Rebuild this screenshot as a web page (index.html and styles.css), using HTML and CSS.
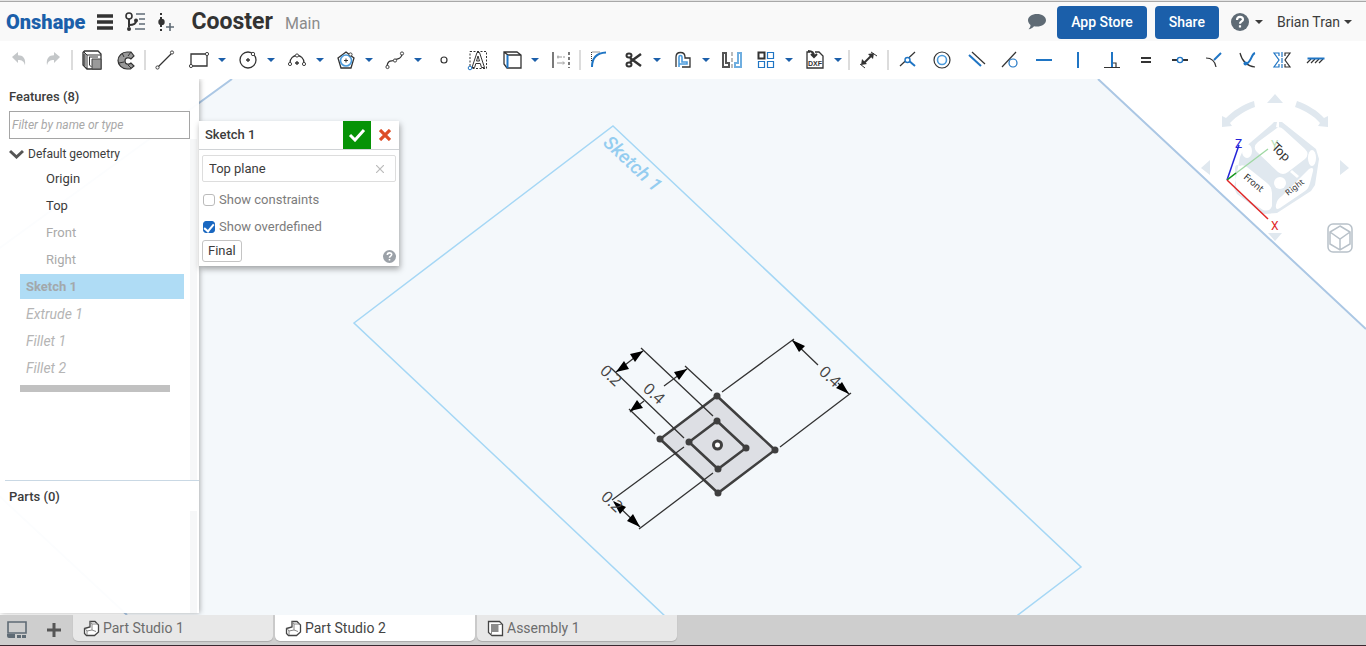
FILE: index.html
```html
<!DOCTYPE html>
<html lang="en">
<head>
<meta charset="utf-8">
<title>Cooster - Onshape</title>
<link rel="stylesheet" href="styles.css">
</head>
<body>
<header class="topbar">
  <a class="brand" href="#">Onshape</a>
  <button class="hbtn" aria-label="Menu"><svg width="16" height="18" viewBox="0 0 16 18"><path d="M0 3h16M0 9h16M0 15h16" stroke="#333" stroke-width="3.4"/></svg></button>
  <button class="hbtn" aria-label="Versions"><svg width="21" height="20" viewBox="0 0 21 20" fill="none"><path d="M4 7v8M4 13c5 0 7-1 7-4" stroke="#333" stroke-width="2"/><circle cx="4" cy="4" r="3" stroke="#333" stroke-width="1.600"/><circle cx="4" cy="17" r="2" fill="#333"/><circle cx="11" cy="8.500" r="2" fill="#333"/><path d="M11 2h9M14 7h6M14 12h6M10 17h10" stroke="#5f6b75" stroke-width="1.600"/></svg></button>
  <button class="hbtn" aria-label="Create version"><svg width="17" height="20" viewBox="0 0 17 20" fill="none"><path d="M3 1v18" stroke="#333" stroke-width="2" stroke-dasharray="2 2"/><circle cx="3.500" cy="10" r="3.200" fill="#333"/><path d="M8 15h8M12 11v8" stroke="#5f6b75" stroke-width="1.600"/></svg></button>
  <h1 class="doc">Cooster</h1>
  <span class="branch">Main</span>
  <div class="account">
    <button class="hbtn" aria-label="Comments"><svg width="20" height="18" viewBox="0 0 20 18"><path d="M10 1c5 0 9 2.700 9 6.300s-4 6.300-9 6.300c-1 0-2-.1-3-.3-1.500 1.700-3.300 2.700-5.500 3C3 15 3.500 13.700 3.500 12 2 10.800 1 9.200 1 7.300 1 3.700 5 1 10 1z" fill="#5f6b75"/></svg></button>
    <button class="primary">App Store</button>
    <button class="primary">Share</button>
    <button class="menu" aria-label="Help"><svg width="18" height="18" viewBox="0 0 18 18"><circle cx="9" cy="9" r="9" fill="#5f6b75"/><path d="M6 7c0-4 6-4 6-.6C12 8.500 9 8.500 9 10.800M9 12.300v2.200" stroke="#fff" stroke-width="2.200" fill="none"/></svg><i class="caret"></i></button>
    <button class="menu user">Brian Tran<i class="caret"></i></button>
  </div>
</header>

<nav class="tools" aria-label="Sketch tools">
  <button class="tool" aria-label="Undo"><svg viewBox="0 0 24 24"><path d="M5 9l6-5v3.300c5 0 8 3 7 10-1-4-3-5.300-7-5.300V15z" fill="#c4c7c9"/></svg></button>
  <button class="tool" aria-label="Redo"><svg viewBox="0 0 24 24"><path d="M19 9l-6-5v3.300c-5 0-8 3-7 10 1-4 3-5.300 7-5.300V15z" fill="#c4c7c9"/></svg></button>
  <i class="sep"></i>
  <button class="tool" aria-label="Extrude"><svg viewBox="0 0 24 24"><path d="M3 4.500L4.500 3H18l3 3v15H7l-4-4z" fill="#fff" class="k"/><path d="M3.500 3.500L7 7h14M7 7v14M5 5v13M9 9h9M9.500 9v8l2 2M4 6v11" class="t"/><path d="M12 11h9v10h-9z" fill="#9a9a9a" stroke="#444"/></svg></button>
  <button class="tool" aria-label="Revolve"><svg viewBox="0 0 24 24"><path d="M17 4h-4c-5 0-9 4-9 8.500S8 21 13 21h3.500l3.500-3-3-3c-2 2-6 1.500-6-2s4-4 6-2l3-3z" fill="#999" class="b"/><path d="M17 4l-3 4M17 20l-3-3M8 5l2 4M5 15l5-1" class="t"/></svg></button>
  <i class="sep"></i>
  <button class="tool" aria-label="Line"><svg viewBox="0 0 24 24"><path d="M5 19L18 6" class="b"/><circle cx="4.500" cy="19.500" r="1.600" class="n"/><circle cx="19" cy="4.500" r="1.600" class="n"/></svg></button>
  <button class="tool drop" aria-label="Rectangle"><svg viewBox="0 0 24 24"><path d="M4 6h16v12H4z" class="k"/><circle cx="4" cy="18" r="1.600" class="n"/><circle cx="20" cy="6" r="1.600" class="n"/></svg><i class="caret"></i></button>
  <button class="tool drop" aria-label="Circle"><svg viewBox="0 0 24 24"><circle cx="12" cy="12" r="8" class="k"/><path d="M10 12h4M12 10v4" class="k"/><circle cx="17" cy="6" r="1.700" class="n"/></svg><i class="caret"></i></button>
  <button class="tool drop" aria-label="Arc"><svg viewBox="0 0 24 24"><path d="M5 15C5 5 19 5 19 15" class="k"/><path d="M10 15h4M12 13v4" class="k"/><circle cx="5" cy="16" r="1.600" class="n"/><circle cx="19" cy="16" r="1.600" class="n"/><circle cx="12" cy="7.500" r="1.600" class="n"/></svg><i class="caret"></i></button>
  <button class="tool drop" aria-label="Polygon"><svg viewBox="0 0 24 24"><path d="M12 4l8 6-3 10H7L4 10z" class="k"/><circle cx="12" cy="12.500" r="5.500" class="l"/><path d="M10 12.500h4M12 10.500v4" class="t"/><circle cx="16.500" cy="6.500" r="1.600" class="n"/></svg><i class="caret"></i></button>
  <button class="tool drop" aria-label="Spline"><svg viewBox="0 0 24 24"><path d="M4 18c1-7 5-4 8-6s6 0 7-6" class="k"/><circle cx="4.500" cy="19" r="1.600" class="n"/><circle cx="12" cy="12.500" r="1.600" class="n"/><circle cx="19" cy="5.500" r="1.600" class="n"/></svg><i class="caret"></i></button>
  <button class="tool" aria-label="Point"><svg viewBox="0 0 24 24"><circle cx="12" cy="12" r="3" class="b"/></svg></button>
  <button class="tool" aria-label="Text"><svg viewBox="0 0 24 24"><path d="M4 3.500h16.500v17H4z" class="t" stroke-dasharray="2 1.500"/><path d="M6 19.500l5-15h2.500l5 15h-3l-1.200-4h-4.500l-1.200 4zM10.500 13h3L12 8z" class="t"/><circle cx="4" cy="20" r="1.800" fill="#fff" stroke="#1f75c4"/></svg></button>
  <button class="tool drop" aria-label="Use"><svg viewBox="0 0 24 24"><path d="M4 4h13l4 3v13H7l-3-4zM4 4l4 3h13" class="k"/><path d="M7.500 7v13" class="bl"/></svg><i class="caret"></i></button>
  <button class="tool" aria-label="Construction"><svg viewBox="0 0 24 24"><path d="M4 4v16" class="k"/><path d="M20 4v16" class="k" stroke-dasharray="3 2"/><path d="M8 9h8M8 15h8" stroke="#999" fill="none" stroke-dasharray="5 1"/><path d="M9 7.500v3M14 13.500v3" stroke="#999"/></svg></button>
  <i class="sep"></i>
  <button class="tool" aria-label="Fillet"><svg viewBox="0 0 24 24"><path d="M4 19C4 9 9 5 18 4.500" class="bl"/><path d="M3.500 13V4h9" class="t" stroke-dasharray="1 1"/></svg></button>
  <button class="tool drop" aria-label="Trim"><svg viewBox="0 0 24 24"><path d="M19 6L8 14M19 18L8 10" stroke="#333" stroke-width="2.500"/><ellipse cx="7" cy="7.500" rx="2.500" ry="2" class="kk"/><ellipse cx="7" cy="16.500" rx="2.500" ry="2" class="kk"/></svg><i class="caret"></i></button>
  <button class="tool drop" aria-label="Offset"><svg viewBox="0 0 24 24"><path d="M5 19V9c0-6 9-6 9 0v1h5v9h-8" class="k"/><path d="M8 19V9c0-2 3-2 3 0v5h5v2h-8" class="l"/></svg><i class="caret"></i></button>
  <button class="tool" aria-label="Mirror"><svg viewBox="0 0 24 24"><path d="M3 5h3v10h3v4H3z" stroke="#555" stroke-width="2" fill="none"/><path d="M12 4v16" stroke="#aaa" stroke-width="1.600" stroke-dasharray="4 2"/><path d="M21 5h-3v10h-3v4h6z" stroke="#6faee0" stroke-width="2" fill="none"/></svg></button>
  <button class="tool drop" aria-label="Pattern"><svg viewBox="0 0 24 24"><path d="M4.500 4.500h6v6h-6z" class="kk"/><path d="M13.500 4.500h6v6h-6zM4.500 13.500h6v6h-6zM13.500 13.500h6v6h-6z" class="bx"/></svg><i class="caret"></i></button>
  <button class="tool drop" aria-label="Insert DXF"><svg viewBox="0 0 24 24"><path d="M4 10V4h3M12 4h4l4 4v12H4v-10" class="k"/><path d="M5 3c4 0 6 1 6 5M8 6l3 3 3-3" class="kk"/><text x="5" y="18" class="dxf">DXF</text></svg><i class="caret"></i></button>
  <i class="sep"></i>
  <button class="tool" aria-label="Dimension"><svg viewBox="0 0 24 24"><path d="M7 15l8-8" stroke="#333" stroke-width="2"/><path d="M4 17l1-6 5 5zM17 5l-1 6-5-5z" fill="#333"/><path d="M3 16l5 4M14 4l6 4" class="t"/></svg></button>
  <i class="sep"></i>
  <button class="tool" aria-label="Coincident"><svg viewBox="0 0 24 24"><path d="M4 18L19 4" class="b"/><path d="M12 12l7 6" class="bl"/><circle cx="11.500" cy="12" r="2.500" class="bw"/></svg></button>
  <button class="tool" aria-label="Concentric"><svg viewBox="0 0 24 24"><circle cx="12" cy="12" r="8" class="b"/><circle cx="12" cy="12" r="4.500" class="l"/></svg></button>
  <button class="tool" aria-label="Parallel"><svg viewBox="0 0 24 24"><path d="M8 4l13 12" class="b"/><path d="M5 7l12 11" class="bl"/></svg></button>
  <button class="tool" aria-label="Tangent"><svg viewBox="0 0 24 24"><path d="M4 19L18 4" class="b"/><circle cx="15" cy="15" r="4" class="bx"/></svg></button>
  <button class="tool" aria-label="Horizontal"><svg viewBox="0 0 24 24"><path d="M4 12h16" class="bl"/></svg></button>
  <button class="tool" aria-label="Vertical"><svg viewBox="0 0 24 24"><path d="M12 4v16" class="bl"/></svg></button>
  <button class="tool" aria-label="Perpendicular"><svg viewBox="0 0 24 24"><path d="M4 19.500h16M12 15h4v4" class="b"/><path d="M12 4v15" class="bl"/></svg></button>
  <button class="tool" aria-label="Equal"><svg viewBox="0 0 24 24"><path d="M7 10h10M7 14h10" stroke="#333" stroke-width="2"/></svg></button>
  <button class="tool" aria-label="Midpoint"><svg viewBox="0 0 24 24"><path d="M4 12h16" stroke="#333" stroke-width="2"/><circle cx="12" cy="12" r="2.600" class="bw"/></svg></button>
  <button class="tool" aria-label="Normal"><svg viewBox="0 0 24 24"><path d="M4 10c5 0 9 3 10 9" class="b"/><path d="M12 12l7-7" class="bl"/></svg></button>
  <button class="tool" aria-label="Pierce"><svg viewBox="0 0 24 24"><path d="M4 5c2 8 6 13 15 14" class="b"/><path d="M10 16c6-2 5-10 9-11" class="bl"/><circle cx="9.500" cy="15.500" r="2" fill="#1f75c4"/></svg></button>
  <button class="tool" aria-label="Symmetric"><svg viewBox="0 0 24 24"><path d="M9 8V5H4l5 7-5 7h5v-3" class="bx"/><path d="M12 4v16" class="bx" stroke-dasharray="5 1"/><path d="M15 8V5h5l-5 7 5 7h-5v-3" class="b"/></svg></button>
  <button class="tool" aria-label="Fix"><svg viewBox="0 0 24 24"><path d="M7 11l-4 4M11 11l-4 4M15 11l-4 4M19 11l-4 4" class="b"/><path d="M3.500 10.500h17" class="bl"/></svg></button>
</nav>

<main class="work">
  <svg class="scene" viewBox="0 79 1366 536" preserveAspectRatio="xMidYMid slice" fill="none">
    <path d="M232 79H1098L1366 329V615H127L-150 357Z" fill="#f4f8fb"/>
    <path d="M232 79L-150 357L127 615M1098 79L1366 329" stroke="#abc7e4" stroke-width="2"/>
    <path d="M613 126L1081 567L822 764L354 323Z" stroke="#a5d7f5" stroke-width="1.500"/>
    <text class="plane-name" transform="translate(602 144) rotate(43)">Sketch 1</text>
    <path d="M717 396L775 450L718 493L660 439Z" fill="#dddfe4" stroke="#3f3f3f" stroke-width="2.500"/>
    <path d="M717 421L746 448L718 469L689 442Z" stroke="#3f3f3f" stroke-width="2.500"/>
    <g fill="#3f3f3f"><circle cx="717" cy="396" r="3.500"/><circle cx="775" cy="450" r="3.500"/><circle cx="718" cy="493" r="3.500"/><circle cx="660" cy="439" r="3.500"/><circle cx="717" cy="421" r="3.500"/><circle cx="746" cy="448" r="3.500"/><circle cx="718" cy="469" r="3.500"/><circle cx="689" cy="442" r="3.500"/></g>
    <circle cx="717.500" cy="445" r="4" fill="#fff" stroke="#3f3f3f" stroke-width="3"/>
    <path d="M722 392L794 339M780 447L851 393M792 340L818 365M849 394L838 383M713 416L641 348M684 438L611 368M616 372L643 351M712 391L685 366M664 386L687 369M644 401L630 412M655 434L629 409M684 447L612 500M713 473L639 529M614 502L640 527" stroke="#333" stroke-width="1.300"/>
    <g fill="#000"><path d="M792 340l13 6-6 6zM849 394l-13-6 6-6zM643 351l-8 11-5-8zM616 372l8-11 5 8zM687 369l-8 11-5-8zM630 411l7-11 6 8zM613 501l13 6-6 7zM640 527l-13-6 6-7z"/></g>
    <g class="dims"><text transform="translate(818 373) rotate(43)">0.4</text><text transform="translate(642 390) rotate(43)">0.4</text><text transform="translate(599 372) rotate(43)">0.2</text><text transform="translate(600 498) rotate(43)">0.2</text></g>
    <g fill="#e0e8ef">
      <path d="M1275 94l8 9h-16zM1275 241l-7-8h14zM1201 168l9-8v15zM1349 168l-9-8v15zM1222 116v11l10-1-2-3c7-7 14-12 25-16l-1-6c-12 4-21 10-28 17zM1328 116v11l-10-1 2-3c-6-7-14-12-25-16l2-6c11 4 21 10 27 17z"/>
      <path fill-rule="evenodd" d="M1274 122h8l34 27 3 10-4 26-4 6-34 22-13 1-27-20-3-6 6-31 4-9 27-23zM1277 128l-19 14q-6 5-1 10l21 20q5 4 10 0l17-13q5-5 0-10l-22-20q-3-3-6-1zM1240 166q-5-3-5 3l1 17q1 6 5 9l22 15q7 2 9-4l0-13q0-6-5-10l-20-16q-4-3-7-1zM1282 196q-5 3-6 9t4 3l25-17q4-3 5-8l3-12q1-5-4-2z"/>
    </g>
    <g fill="#fff"><ellipse cx="1247" cy="151" rx="5" ry="7"/><ellipse cx="1312" cy="158" rx="4" ry="8"/><circle cx="1280" cy="183" r="6"/><path d="M1276 127l1-5 2 0v6zM1292 170l7 6-2 2-7-6z"/></g>
    <path d="M1227 180L1239 145" stroke="#2424d8" stroke-width="1.500"/><path d="M1227 180L1268 149" stroke="#9ed8a2" stroke-width="1.300"/><path d="M1227 180l9-7" stroke="#15951c" stroke-width="1.500"/><path d="M1227 180L1268 219" stroke="#e02626" stroke-width="1.500"/>
    <text x="1235" y="148" class="axis" fill="#2424d8">Z</text><text x="1271" y="149" class="axis" fill="#b7e0bc">Y</text><text x="1271" y="230" class="axis" fill="#e02626">X</text>
    <g class="face"><text transform="translate(1271 148) rotate(44)" font-size="12">Top</text><text transform="translate(1243 178) rotate(40)" font-size="9">Front</text><text transform="translate(1288 196) rotate(-38)" font-size="8">Right</text></g>
    <g stroke="#b8c1c9" stroke-width="1.500"><rect x="1328" y="224" width="24" height="28" rx="5"/><path d="M1340 226l10 6v12l-10 6-10-6v-12zM1330 232l10 7 10-7M1340 239v11"/></g>
  </svg>

  <aside class="side">
    <section class="features">
      <h2><label for="filter">Features (8)</label></h2>
      <input id="filter" class="filter" placeholder="Filter by name or type">
      <div class="tree">
        <button class="group"><svg width="15" height="10" viewBox="0 0 15 10"><path d="M1 2l6.500 6L14 2" fill="none" stroke="#555" stroke-width="3"/></svg>Default geometry</button>
        <ul class="list">
          <li class="sub">Origin</li><li class="sub">Top</li><li class="sub off">Front</li><li class="sub off">Right</li>
          <li class="sel">Sketch 1</li><li class="sup">Extrude 1</li><li class="sup">Fillet 1</li><li class="sup">Fillet 2</li>
        </ul>
        <div class="rollback"></div>
      </div>
    </section>
    <section class="parts"><h2>Parts (0)</h2><div class="track"></div></section>
  </aside>

  <form class="dialog">
    <div class="dhead"><h2>Sketch 1</h2><button type="button" class="ok" aria-label="Accept"><svg width="18" height="14" viewBox="0 0 18 14"><path d="M2 7l5 5L16 2" fill="none" stroke="#fff" stroke-width="3"/></svg></button><button type="button" class="no" aria-label="Cancel"><svg width="12" height="12" viewBox="0 0 12 12"><path d="M1 1l10 10M11 1L1 11" stroke="#dd4d25" stroke-width="3.200"/></svg></button></div>
    <div class="dbody">
      <div class="plane"><input aria-label="Sketch plane" value="Top plane"><button type="button" aria-label="Clear"><svg width="8" height="8" viewBox="0 0 8 8"><path d="M0 0l8 8M8 0L0 8" stroke="#bbb" stroke-width="1.200"/></svg></button></div>
      <label class="check"><input type="checkbox">Show constraints</label>
      <label class="check"><input type="checkbox" checked>Show overdefined</label>
      <div class="dfoot"><button type="button" class="final">Final</button><button type="button" class="q" aria-label="Help"><svg width="13" height="13" viewBox="0 0 18 18"><circle cx="9" cy="9" r="9" fill="#9ba1a8"/><path d="M6 7c0-4 6-4 6-.6C12 8.500 9 8.500 9 10.800M9 12.300v2.200" stroke="#fff" stroke-width="2.200" fill="none"/></svg></button></div>
    </div>
  </form>
</main>

<footer class="tabs">
  <button class="tabtool" aria-label="Tab manager"><svg width="20" height="18" viewBox="0 0 20 18"><path d="M1 1h18v11H1z" fill="none" stroke="#5f6b75" stroke-width="1.600"/><path d="M0 13h8v4H2q-2 0-2-2zM10 14h4v3h-4zM15 14h4v3h-4z" fill="#5f6b75"/></svg></button>
  <button class="tabtool plus" aria-label="New tab"><svg width="14" height="14" viewBox="0 0 14 14"><path d="M0 7h14M7 0v14" stroke="#555" stroke-width="3"/></svg></button>
  <button class="tab"><svg width="17" height="17" viewBox="0 0 17 17"><path d="M1.500 8.500L7 7V1.500h5L15.500 5v7l-4 3.500h-8l-2-2z" class="tabico"/><path d="M7 1.500l2 2.500v6l-5 1-2-2.500M9 4h6M9 10l4 1.500M4 11v4" class="tabline"/></svg>Part Studio 1</button>
  <button class="tab active"><svg width="17" height="17" viewBox="0 0 17 17"><path d="M1.500 8.500L7 7V1.500h5L15.500 5v7l-4 3.500h-8l-2-2z" class="tabico"/><path d="M7 1.500l2 2.500v6l-5 1-2-2.500M9 4h6M9 10l4 1.500M4 11v4" class="tabline"/></svg>Part Studio 2</button>
  <button class="tab"><svg width="17" height="17" viewBox="0 0 17 17"><path d="M1.500 1.500h11l3 3v11H5l-3.500-3z" class="tabico"/><path d="M4 4.500h11M4.500 4v11" class="tabline"/><path d="M4 4h7.500v8H4z" fill="#8c8c8c"/></svg>Assembly 1</button>
</footer>
</body>
</html>
```
FILE: styles.css
```css
* { box-sizing: border-box; }
body { margin: 0; height: 100vh; display: flex; flex-direction: column; background: #fff; color: #3c3c3c; font: 14px/20px Roboto, "Liberation Sans", sans-serif; overflow: hidden; }
button { border: 0; background: none; padding: 0; margin: 0; font: inherit; color: inherit; cursor: pointer; }
h1, h2, ul { margin: 0; padding: 0; list-style: none; }
svg { display: block; flex: none; }

.topbar { display: flex; align-items: center; height: 41px; flex: none; padding: 2px 14px 0 6px; background: #f9f9f9; border-top: 1px solid #e4e4e4; box-shadow: inset 0 1px #a8a8a8; gap: 12px; }
.brand { color: #1b5faa; font: 900 20px/24px Roboto, sans-serif; text-decoration: none; }
.doc { font-size: 23px; line-height: 26px; font-weight: 700; margin-left: 4px; color: #333; }
.branch { font-size: 16px; color: #8b8b8b; padding-top: 4px; }
.account { display: flex; align-items: center; margin-left: auto; }
.primary { height: 33px; background: #1b5faa; color: #fff; font-weight: 500; border-radius: 4px; padding: 0 14px; margin-right: 8px; }
.account .hbtn { margin-right: 10px; }
.menu { display: flex; align-items: center; gap: 6px; margin-left: 4px; }
.user { margin-left: 14px; gap: 4px; }
.caret { width: 0; height: 0; border: 4px solid transparent; border-top-color: currentColor; border-bottom: 0; }

.tools { display: flex; align-items: center; height: 38px; flex: none; padding-left: 2px; background: #fff; overflow: hidden; }
.tool { display: flex; align-items: center; width: 34px; height: 30px; padding-left: 5px; flex: none; }
.tool svg { width: 24px; height: 24px; fill: none; }
.drop { width: 49px; gap: 7px; }
.drop .caret { color: #1b5faa; }
.sep { width: 2px; height: 20px; margin: 0 2px 0 1px; background: #dcdcdc; flex: none; }
.k { stroke: #333; stroke-width: 1.3; }
path.k, circle.k { fill: none; }
.kk { stroke: #333; stroke-width: 2; fill: none; }
.b { stroke: #333; stroke-width: 1.2; }
.t { stroke: #333; stroke-width: 1; fill: none; }
.n { stroke: #444; stroke-width: 1; fill: #fff; }
.l { stroke: #4b9bdc; stroke-width: 1.6; fill: none; }
.bl { stroke: #1f75c4; stroke-width: 2; fill: none; }
.bx { stroke: #1f75c4; stroke-width: 1.2; fill: none; }
.bw { stroke: #1f75c4; stroke-width: 1.4; fill: #fff; }
.dxf { font: 700 7px "Liberation Sans", sans-serif; fill: #333; }

.work { position: relative; display: flex; flex: 1; align-items: flex-start; min-height: 0; overflow: hidden; }
.scene { position: absolute; inset: 0; width: 100%; height: 100%; }
.plane-name { font: italic 500 19px Roboto, sans-serif; fill: #94cdf0; }
.dims text { font: 16px "Open Sans", sans-serif; fill: #444; }
.axis { font: 12px Roboto, sans-serif; }
.face text { font-family: "DejaVu Sans", sans-serif; fill: #333; }

.side { position: relative; display: flex; flex-direction: column; align-self: stretch; width: 199px; margin-bottom: 2px; flex: none; background: rgba(255, 255, 255, .96); box-shadow: 1px 0 5px rgba(0, 0, 0, .3); }
.side h2 { font-size: 13px; line-height: 18px; font-weight: 500; }
.features { display: flex; flex-direction: column; flex: 1; margin-left: 5px; padding: 9px 0 0 4px; border-bottom: 1px solid #c9d8e4; }
.filter { width: 181px; height: 28px; margin-top: 5px; padding: 0 2px; border: 1px solid #a5a5a5; border-radius: 0; background: #fff; font: italic 12px Roboto, sans-serif; }
.filter::placeholder { color: #a8a8a8; }
.tree { flex: 1; width: 188px; padding-top: 3px; border-right: 7px solid #f6f7f8; }
.group { display: flex; align-items: center; gap: 4px; height: 24px; font-size: 12px; }
.list { margin-left: 11px; }
.list li { width: 164px; height: 25px; line-height: 26px; margin-bottom: 2px; padding-left: 6px; font-size: 14px; }
.list .sub { padding-left: 26px; font-size: 13px; }
.list .off { color: #aaa; }
.list .sel { background: #afdcf5; color: #a3a8ab; font-weight: 700; font-size: 13px; }
.list .sup { color: #b5b5b5; font-style: italic; }
.rollback { width: 150px; height: 7px; margin: 5px 0 0 11px; background: #c1c1c1; }
.parts { display: flex; flex-direction: column; height: 132px; flex: none; padding: 7px 2px 0 9px; }
.track { flex: 1; margin-top: 5px; border-right: 7px solid #f6f7f8; }

.dialog { position: relative; width: 200px; margin-top: 42px; background: #fff; box-shadow: 1px 3px 6px rgba(0, 0, 0, .35); }
.dhead { display: flex; align-items: center; height: 29px; border-bottom: 1px solid #d0d3d6; padding-left: 6px; }
.dhead h2 { flex: 1; font-size: 13px; font-weight: 500; }
.ok, .no { display: flex; align-items: center; justify-content: center; width: 28px; height: 28px; }
.ok { background: #069306; }
.dbody { padding: 5px 3px 3px; }
.plane { display: flex; align-items: center; height: 27px; border: 1px solid #ddd; border-radius: 2px; padding: 0 11px 0 6px; }
.plane input { flex: 1; min-width: 0; border: 0; padding: 0; color: #3c3c3c; font: 13px Roboto, sans-serif; }
.check { display: flex; align-items: center; gap: 4px; height: 27px; font-size: 13px; color: #7c7c7c; padding-left: 1px; }
.plane + .check { margin-top: 4px; }
.check input { appearance: none; width: 12px; height: 12px; margin: 0; border: 1px solid #bbb; border-radius: 3px; background: #fff; }
.check input:checked { border-color: #1967c0; background: #1967c0; display: grid; place-items: center; }
.check input:checked::after { content: ""; width: 4px; height: 8px; margin-bottom: 2px; border: solid #fff; border-width: 0 2px 2px 0; transform: rotate(40deg); }
.dfoot { display: flex; justify-content: space-between; align-items: flex-end; }
.final { height: 22px; margin-bottom: 1px; border: 1px solid #c4c4c4; border-radius: 3px; padding: 0 5px; font-size: 13px; line-height: 20px; }

.tabs { display: flex; align-items: flex-start; height: 31px; flex: none; gap: 2px; background: #cecece; border-bottom: 1px solid #3a2830; }
.tabtool { display: flex; align-items: center; justify-content: center; width: 34px; height: 29px; }
.plus { width: 35px; }
.tab { display: flex; align-items: center; gap: 3px; width: 200px; height: 26px; padding-left: 10px; background: #e8e8e8; color: #6d6d6d; border-radius: 0 0 5px 5px; box-shadow: 0 1px 1px #aaa; }
.active { background: #fff; color: #444; }
.tabico { fill: #fff; stroke: #444; stroke-width: 1.3; }
.tabline { fill: none; stroke: #888; stroke-width: 1; }
```
